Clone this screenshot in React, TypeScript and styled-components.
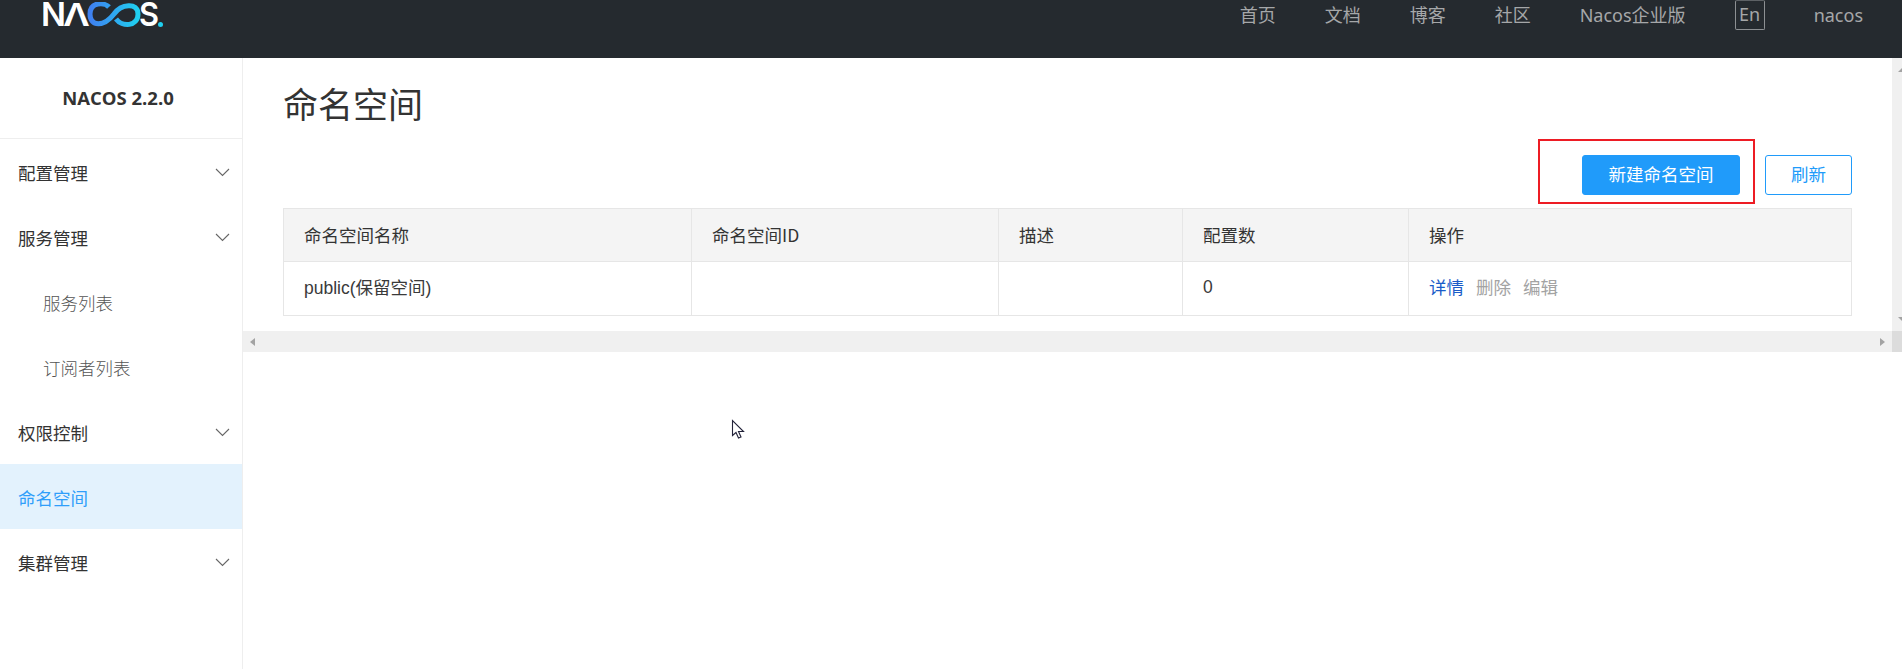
import React from "react";
import styled, { createGlobalStyle } from "styled-components";

const Global = createGlobalStyle`
  html, body { margin: 0; padding: 0; height: 100%; overflow: hidden; background: #fff; }
  body { font-family: "Liberation Sans", "Noto Sans CJK SC", sans-serif; color: #333; }
  * { box-sizing: border-box; }
`;

const Page = styled.div`
  position: relative;
  width: 1902px;
  height: 669px;
  display: flex;
  flex-direction: column;
  overflow: hidden;
`;

const Header = styled.header`
  flex: 0 0 58px;
  height: 58px;
  background: #252a2f;
  display: flex;
  align-items: flex-start;
  padding: 0 39px 0 43px;
`;

const LogoBox = styled.div`
  flex: 0 0 auto;
  margin-top: 2px;
  display: flex;
`;

const Nav = styled.nav`
  margin-left: auto;
  display: flex;
  align-items: flex-start;
`;

const NavItem = styled.span<{ $gap?: number }>`
  font-family: "Noto Sans", "Noto Sans CJK SC", sans-serif;
  font-size: 18px;
  font-weight: 400;
  line-height: 31px;
  color: #a5a7a9;
  margin-left: ${(p) => p.$gap ?? 49}px;
  white-space: nowrap;
`;

const LangBox = styled.span`
  margin-left: 49px;
  width: 30px;
  height: 30px;
  border: 1px solid #8d9093;
  border-radius: 2px;
  border-top-color: #5d6165;
  font-family: "Noto Sans", sans-serif;
  font-size: 18px;
  line-height: 27px;
  text-align: center;
  color: #a5a7a9;
`;

const Body = styled.div`
  flex: 1;
  display: flex;
  min-height: 0;
`;

const Sidebar = styled.aside`
  flex: 0 0 243px;
  border-right: 1px solid #eeeeee;
  display: flex;
  flex-direction: column;
`;

const Version = styled.div`
  height: 81px;
  padding: 0 6px 2px 0;
  border-bottom: 1px solid #eeeeee;
  display: flex;
  align-items: center;
  justify-content: center;
  font-family: "Open Sans", sans-serif;
  font-weight: 700;
  font-size: 18.5px;
  color: #333;
`;

const MenuItem = styled.div<{ $sub?: boolean; $active?: boolean }>`
  height: 65px;
  flex: 0 0 65px;
  display: flex;
  align-items: center;
  justify-content: space-between;
  padding: 2px 12px 0 ${(p) => (p.$sub ? 43 : 18)}px;
  font-family: "Noto Sans CJK SC", sans-serif;
  font-size: 17.5px;
  font-weight: ${(p) => (p.$sub ? 300 : 400)};
  color: ${(p) => (p.$active ? "#2f9efa" : p.$sub ? "#555" : "#333")};
  background: ${(p) => (p.$active ? "#e3f2fd" : "transparent")};
`;

const Main = styled.main`
  flex: 1;
  min-width: 0;
  display: flex;
  flex-direction: column;
`;

const ScrollRow = styled.div`
  display: flex;
  height: 273px;
`;

const Content = styled.div`
  flex: 1;
  min-width: 0;
  padding: 0 40px;
`;

const Title = styled.h1`
  margin: 0 0 3px;
  height: 94px;
  line-height: 90px;
  font-family: "Noto Sans CJK SC", sans-serif;
  font-size: 35px;
  font-weight: 400;
  color: #333;
`;

const Toolbar = styled.div`
  display: flex;
  justify-content: flex-end;
  gap: 25px;
  margin-bottom: 13px;
`;

const Highlighted = styled.div`
  position: relative;
  display: flex;
`;

const RedFrame = styled.span`
  position: absolute;
  left: -44px;
  right: -15px;
  top: -16px;
  bottom: -9px;
  border: 2px solid #ed1c24;
  pointer-events: none;
`;

const Button = styled.button<{ $primary?: boolean }>`
  height: 40px;
  width: ${(p) => (p.$primary ? 158 : 87)}px;
  padding: 0 0 3px;
  border-radius: 3px;
  border: 1px solid #209bfa;
  background: ${(p) => (p.$primary ? "#209bfa" : "#fff")};
  color: ${(p) => (p.$primary ? "#fff" : "#209bfa")};
  font-family: "Noto Sans CJK SC", sans-serif;
  font-size: 17.5px;
  font-weight: 400;
`;

const Table = styled.table`
  width: 1568px;
  table-layout: fixed;
  border-collapse: collapse;
  border: 1px solid #e6e6e6;
`;

const Th = styled.th<{ $w: number }>`
  width: ${(p) => p.$w}px;
  height: 53px;
  padding: 0 20px 2px;
  background: #f4f4f4;
  border: 1px solid #e6e6e6;
  text-align: left;
  font-family: "Noto Sans CJK SC", sans-serif;
  font-size: 17.5px;
  font-weight: 400;
  color: #333;
`;

const Td = styled.td<{ $numeric?: boolean }>`
  height: 54px;
  padding: 0 20px ${(p) => (p.$numeric ? 2 : 5)}px;
  border: 1px solid #e6e6e6;
  font-family: "Liberation Sans", "Noto Sans CJK SC", sans-serif;
  font-size: 17.5px;
  color: #3a3a3a;
`;

const ActionLink = styled.span<{ $muted?: boolean }>`
  font-family: "Noto Sans CJK SC", sans-serif;
  color: ${(p) => (p.$muted ? "#a3a3a3" : "#1a5cc8")};
  margin-right: 12px;
`;

const VTrack = styled.div`
  flex: 0 0 10px;
  background: #f0f0f0;
  display: flex;
  flex-direction: column;
  justify-content: space-between;
  align-items: flex-end;
  padding: 10px 0 10px;
`;

const HTrack = styled.div`
  height: 21px;
  background: #f0f0f0;
  display: flex;
  align-items: center;
  justify-content: space-between;
`;

const ArrowL = styled.span`
  margin-left: 7px;
  width: 0;
  height: 0;
  border-top: 4px solid transparent;
  border-bottom: 4px solid transparent;
  border-right: 5px solid #a3a3a3;
`;

const HEnd = styled.div`
  display: flex;
  align-items: center;
  height: 100%;
`;

const ArrowR = styled.span`
  margin-right: 7px;
  width: 0;
  height: 0;
  border-top: 4px solid transparent;
  border-bottom: 4px solid transparent;
  border-left: 5px solid #a3a3a3;
`;

const Corner = styled.span`
  width: 10px;
  height: 100%;
  background: #dcdcdc;
`;

const ArrowU = styled.span`
  width: 0;
  height: 0;
  border-left: 4px solid transparent;
  border-bottom: 4px solid #a3a3a3;
`;

const ArrowD = styled.span`
  width: 0;
  height: 0;
  border-left: 4px solid transparent;
  border-top: 4px solid #a3a3a3;
`;

const Cursor = styled.svg`
  position: absolute;
  left: 731px;
  top: 419px;
`;

const Chevron = () => (
  <svg width="15" height="9" viewBox="0 0 15 9" fill="none">
    <path d="M1 1l6.500 6.500L14 1" stroke="#666" strokeWidth="1.100" />
  </svg>
);

const Logo = () => (
  <svg width="122" height="26" viewBox="0 0 122 26" fill="none">
    <defs>
      <linearGradient id="inf" x1="0" x2="1" y1="0" y2="0">
        <stop offset="0" stopColor="#3f80f0" />
        <stop offset="1" stopColor="#1fd0f0" />
      </linearGradient>
    </defs>
    <text x="-2" y="24" fontFamily="Inter, sans-serif" fontSize="33" fontWeight="600" fill="#fff" textLength="25" lengthAdjust="spacingAndGlyphs">N</text>
    <text x="21" y="24" fontFamily="Noto Sans, sans-serif" fontSize="33" fontWeight="600" fill="#fff" textLength="25" lengthAdjust="spacingAndGlyphs">Λ</text>
    <path
      d="M66 5 C62 0.500 47 -1 47 12 C47 25 61 25 71 12 C78 2 95 0 95 12 C95 25 79 25 73 17"
      stroke="url(#inf)"
      strokeWidth="5"
      fill="none"
    />
    <text x="96" y="24" fontFamily="Inter, sans-serif" fontSize="33" fontWeight="600" fill="#fff" textLength="20" lengthAdjust="spacingAndGlyphs">S</text>
    <circle cx="117.500" cy="22.500" r="2.500" fill="#1fd0f0" />
  </svg>
);

const menu = [
  { label: "配置管理", arrow: true },
  { label: "服务管理", arrow: true },
  { label: "服务列表", sub: true },
  { label: "订阅者列表", sub: true },
  { label: "权限控制", arrow: true },
  { label: "命名空间", active: true },
  { label: "集群管理", arrow: true },
];

const columns = [
  { title: "命名空间名称", w: 408 },
  { title: "命名空间ID", w: 307 },
  { title: "描述", w: 184 },
  { title: "配置数", w: 226 },
  { title: "操作", w: 443 },
];

export default function App() {
  return (
    <Page>
      <Global />
      <Header>
        <LogoBox>
          <Logo />
        </LogoBox>
        <Nav>
          <NavItem $gap={0}>首页</NavItem>
          <NavItem>文档</NavItem>
          <NavItem>博客</NavItem>
          <NavItem>社区</NavItem>
          <NavItem>Nacos企业版</NavItem>
          <LangBox>En</LangBox>
          <NavItem>nacos</NavItem>
        </Nav>
      </Header>
      <Body>
        <Sidebar>
          <Version>NACOS 2.2.0</Version>
          {menu.map((m) => (
            <MenuItem key={m.label} $sub={m.sub} $active={m.active}>
              {m.label}
              {m.arrow && <Chevron />}
            </MenuItem>
          ))}
        </Sidebar>
        <Main>
          <ScrollRow>
            <Content>
              <Title>命名空间</Title>
              <Toolbar>
                <Highlighted>
                  <Button $primary>新建命名空间</Button>
                  <RedFrame />
                </Highlighted>
                <Button>刷新</Button>
              </Toolbar>
              <Table>
                <thead>
                  <tr>
                    {columns.map((c) => (
                      <Th key={c.title} $w={c.w}>
                        {c.title}
                      </Th>
                    ))}
                  </tr>
                </thead>
                <tbody>
                  <tr>
                    <Td>public(保留空间)</Td>
                    <Td />
                    <Td />
                    <Td $numeric>0</Td>
                    <Td>
                      <ActionLink>详情</ActionLink>
                      <ActionLink $muted>删除</ActionLink>
                      <ActionLink $muted>编辑</ActionLink>
                    </Td>
                  </tr>
                </tbody>
              </Table>
            </Content>
            <VTrack>
              <ArrowU />
              <ArrowD />
            </VTrack>
          </ScrollRow>
          <HTrack>
            <ArrowL />
            <HEnd>
              <ArrowR />
              <Corner />
            </HEnd>
          </HTrack>
        </Main>
      </Body>
      <Cursor width="14" height="22" viewBox="0 0 14 22">
        <path
          d="M1.500 1.500V16.500L5 13.500L7.500 19L10 18L7.500 12.500H12.500Z"
          fill="#fff"
          stroke="#23233a"
          strokeWidth="1.100"
        />
      </Cursor>
    </Page>
  );
}
